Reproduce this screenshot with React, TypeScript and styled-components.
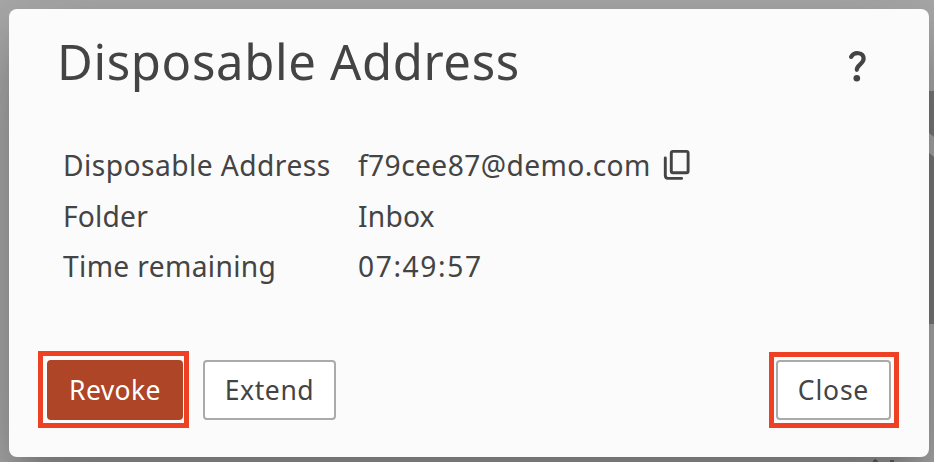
import React from "react";
import styled, { createGlobalStyle } from "styled-components";

const GlobalStyle = createGlobalStyle`
  *, *::before, *::after { box-sizing: border-box; }
  body { margin: 0; overflow: hidden; }
`;

const Backdrop = styled.main`
  position: relative;
  height: 462px;
  padding: 9px 5px 5px 9px;
  overflow: hidden;
  background: #aaaaaa;
  color: #444444;
  font-family: "Noto Sans", "Open Sans", sans-serif;
`;

const PageBehind = styled.svg`
  position: absolute;
  top: 0;
  left: 0;
`;

const Dialog = styled.section`
  position: relative;
  display: flex;
  flex-direction: column;
  height: 448px;
  background: #fbfbfb;
  border-radius: 8px;
  box-shadow:
    0 22px 30px -14px rgba(0, 0, 0, 0.2),
    0 48px 76px 6px rgba(0, 0, 0, 0.14),
    0 18px 92px 16px rgba(0, 0, 0, 0.12);
`;

const Header = styled.header`
  display: flex;
  justify-content: space-between;
  height: 131px;
  padding: 18px 61px 0 48px;
`;

const Title = styled.h1`
  margin: 0;
  font-size: 49px;
  font-weight: 400;
  line-height: 68px;
  letter-spacing: 0.65px;
  white-space: nowrap;
`;

const HelpButton = styled.button`
  display: flex;
  align-self: flex-start;
  margin-top: 24px;
  padding: 0;
  border: 0;
  background: none;
  color: inherit;
`;

const Details = styled.dl`
  display: grid;
  grid-template-columns: 295px 1fr;
  grid-template-rows: 51px 50px 51px;
  flex: 1;
  margin: 0;
  padding-left: 54px;
  font-size: 28.2px;
  line-height: 51px;
  white-space: nowrap;
`;

const Label = styled.dt<{ $track: number }>`
  letter-spacing: ${(p) => p.$track}px;
`;

const Value = styled.dd<{ $track: number }>`
  display: flex;
  align-items: flex-start;
  margin: 0;
  letter-spacing: ${(p) => p.$track}px;
`;

const CopyButton = styled.button`
  display: flex;
  margin: 9px 0 0 12px;
  padding: 0;
  border: 0;
  background: none;
  color: inherit;
`;

const Footer = styled.footer`
  display: flex;
  gap: 20px;
  padding: 0 38px 37px;
`;

const Button = styled.button<{ $primary?: boolean; $width: number; $track: number }>`
  position: relative;
  width: ${(p) => p.$width}px;
  height: 60px;
  padding: 0;
  border: 2px solid ${(p) => (p.$primary ? "#ad4526" : "#aaaaaa")};
  border-radius: 4px;
  background: ${(p) => (p.$primary ? "#ad4526" : "#ffffff")};
  color: ${(p) => (p.$primary ? "#ffffff" : "#444444")};
  font: 400 26.5px/56px "Noto Sans", "Open Sans", sans-serif;
  letter-spacing: ${(p) => p.$track}px;
  white-space: nowrap;
`;

const CloseButton = styled(Button)`
  margin-left: auto;
`;

const Highlight = styled.span<{ $inset: string }>`
  position: absolute;
  inset: ${(p) => p.$inset};
  border: 5px solid #ee4023;
`;

const QuestionIcon = () => (
  <svg width="20" height="32" viewBox="0 0 20 32" fill="none">
    <path
      d="M3.2 5.8C6 0.6 15.6 0.9 15.6 7.8C15.6 12.8 8.8 13.9 8.8 18.8"
      stroke="currentColor"
      strokeWidth="4.2"
      strokeLinecap="round"
    />
    <circle cx="8.8" cy="27.3" r="3.3" fill="currentColor" />
  </svg>
);

const CopyIcon = () => (
  <svg width="28" height="32" viewBox="0 0 28 32" fill="none" stroke="currentColor" strokeWidth="2.9">
    <rect x="8.3" y="2.4" width="16.8" height="21.4" rx="1.6" />
    <path d="M2.3 9V26.2Q2.3 29.4 5 29.4H18.6" strokeLinecap="round" />
  </svg>
);

export default function App() {
  return (
    <Backdrop>
      <GlobalStyle />
      <PageBehind width="934" height="462">
        <path d="M900 91H934V137L929 133L900 112Z" fill="#7b7b7b" />
        <path d="M900 132L929 153L934 157V324H900Z" fill="#7b7b7b" />
        <path d="M874 460L881 468M892 460V468" stroke="#666666" strokeWidth="4" />
      </PageBehind>
      <Dialog role="dialog" aria-labelledby="dialog-title">
        <Header>
          <Title id="dialog-title">Disposable Address</Title>
          <HelpButton aria-label="Help">
            <QuestionIcon />
          </HelpButton>
        </Header>
        <Details>
          <Label $track={0.45}>Disposable Address</Label>
          <Value $track={0.4}>
            f79cee87@demo.com
            <CopyButton aria-label="Copy address">
              <CopyIcon />
            </CopyButton>
          </Value>
          <Label $track={0.2}>Folder</Label>
          <Value $track={0.2}>Inbox</Value>
          <Label $track={0.35}>Time remaining</Label>
          <Value $track={1.6}>07:49:57</Value>
        </Details>
        <Footer>
          <Button $primary $width={136} $track={0.4}>
            Revoke
            <Highlight $inset="-11px -8px -10px -11px" />
          </Button>
          <Button $width={133} $track={0.6}>Extend</Button>
          <CloseButton $width={115} $track={0.8}>
            Close
            <Highlight $inset="-10px -10px -10px -9px" />
          </CloseButton>
        </Footer>
      </Dialog>
    </Backdrop>
  );
}
